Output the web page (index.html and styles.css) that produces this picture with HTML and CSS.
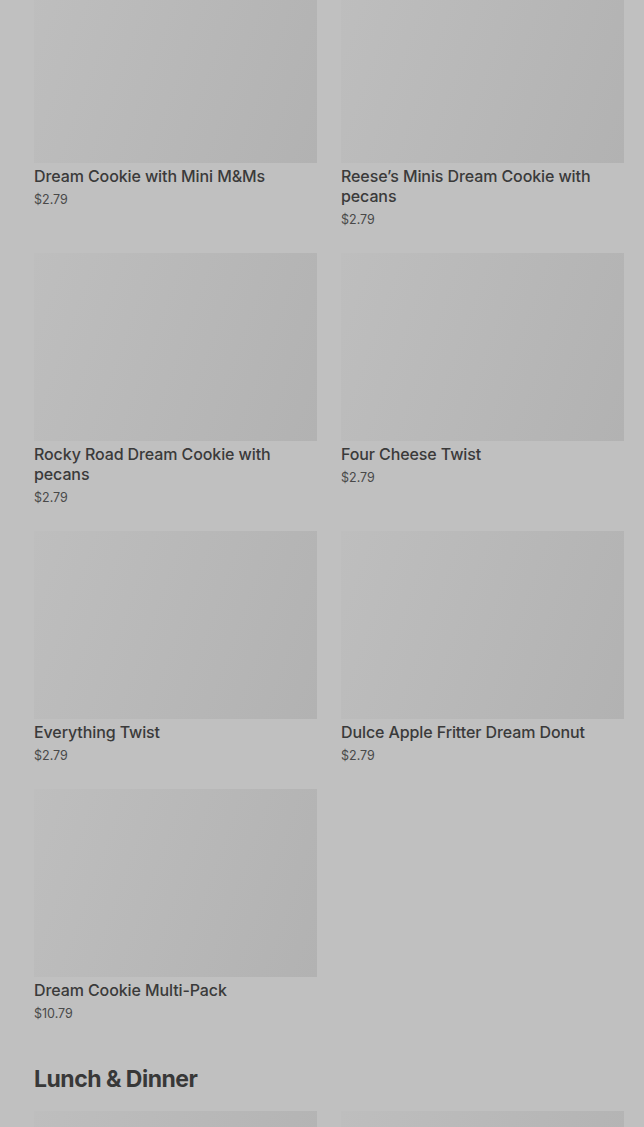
FILE: index.html
```html
<!DOCTYPE html>
<html lang="en">
<head>
    <meta charset="UTF-8">
    <meta name="viewport" content="width=device-width, initial-scale=1.0">
    <title>Menu</title>
    <link rel="stylesheet" href="styles.css">
</head>
<body>
    <div class="menu">
        <section class="category">
            <div class="item-grid">
                <div class="item">
                    <div class="item-photo"></div>
                    <div class="item-name">Dream Cookie with Mini M&amp;Ms</div>
                    <div class="item-price">$2.79</div>
                </div>
                <div class="item">
                    <div class="item-photo"></div>
                    <div class="item-name">Reese’s Minis Dream Cookie with pecans</div>
                    <div class="item-price">$2.79</div>
                </div>
                <div class="item">
                    <div class="item-photo"></div>
                    <div class="item-name">Rocky Road Dream Cookie with pecans</div>
                    <div class="item-price">$2.79</div>
                </div>
                <div class="item">
                    <div class="item-photo"></div>
                    <div class="item-name">Four Cheese Twist</div>
                    <div class="item-price">$2.79</div>
                </div>
                <div class="item">
                    <div class="item-photo"></div>
                    <div class="item-name">Everything Twist</div>
                    <div class="item-price">$2.79</div>
                </div>
                <div class="item">
                    <div class="item-photo"></div>
                    <div class="item-name">Dulce Apple Fritter Dream Donut</div>
                    <div class="item-price">$2.79</div>
                </div>
                <div class="item">
                    <div class="item-photo"></div>
                    <div class="item-name">Dream Cookie Multi-Pack</div>
                    <div class="item-price">$10.79</div>
                </div>
            </div>
        </section>

        <section class="category">
            <h2 class="category-title">Lunch &amp; Dinner</h2>
            <div class="item-grid">
                <div class="item">
                    <div class="item-photo"></div>
                </div>
                <div class="item">
                    <div class="item-photo"></div>
                </div>
            </div>
        </section>
    </div>
</body>
</html>
```

FILE: styles.css
```css
body {
    margin: 0;
    background-color: #c0c0c0;
    color: #3d3d3d;
    font-family: 'Inter', 'Liberation Sans', sans-serif;
    overflow: hidden;
}

.menu {
    margin-top: -25px;
    padding: 0 20px 0 34px;
}

.item-grid {
    display: grid;
    grid-template-columns: 1fr 1fr;
    column-gap: 24px;
    row-gap: 23px;
}

.item-photo {
    height: 188px;
    background: linear-gradient(110deg, #bebebe 0%, #b8b8b8 50%, #b2b2b2 100%);
}

.item-name {
    margin-top: 3px;
    font-size: 16px;
    font-weight: 500;
    line-height: 20px;
    letter-spacing: -0.1px;
    color: #3a3a3a;
}

.item-price {
    margin-top: 4px;
    font-size: 12.5px;
    line-height: 20px;
    color: #494949;
}

.category-title {
    margin: 39px 0 16px;
    font-size: 23px;
    font-weight: 700;
    line-height: 32px;
    letter-spacing: -0.5px;
    color: #383838;
}
```
